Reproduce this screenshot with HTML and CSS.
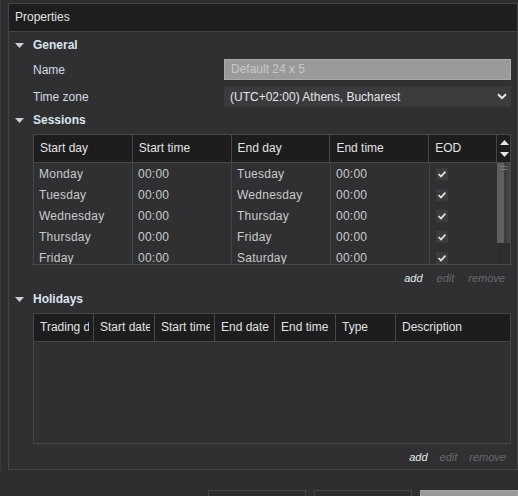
FILE: index.html
```html
<!DOCTYPE html>
<html>
<head>
<meta charset="utf-8">
<link rel="stylesheet" href="styles.css">
</head>
<body>
<div class="frame">
  <div class="panel">
    <div class="panel-title">Properties</div>
    <div class="panel-body">
      <div class="section-head"><svg class="caret" width="9" height="5" viewBox="0 0 9 5"><polygon points="0,0 9,0 4.5,5" fill="#cfcfcf"/></svg>General</div>
      <div class="fields">
        <div class="field"><span class="label">Name</span><div class="input">Default 24 x 5</div></div>
        <div class="field"><span class="label">Time zone</span><div class="select"><span>(UTC+02:00) Athens, Bucharest</span><svg width="10" height="7" viewBox="0 0 10 7"><polyline points="1,1.2 5,5.2 9,1.2" fill="none" stroke="#e8e8e8" stroke-width="2"/></svg></div></div>
      </div>

      <div class="section-head gap-top"><svg class="caret" width="9" height="5" viewBox="0 0 9 5"><polygon points="0,0 9,0 4.5,5" fill="#cfcfcf"/></svg>Sessions</div>
      <div class="tbl sessions">
        <div class="thead">
          <div class="th c1">Start day</div>
          <div class="th c1">Start time</div>
          <div class="th c1">End day</div>
          <div class="th c1">End time</div>
          <div class="th c5">EOD</div>
          <div class="th-scroll">
            <svg width="9" height="5" viewBox="0 0 9 5"><polygon points="0,5 9,5 4.5,0" fill="#e6e6e6"/></svg>
            <svg width="9" height="5" viewBox="0 0 9 5"><polygon points="0,0 9,0 4.5,5" fill="#e6e6e6"/></svg>
          </div>
        </div>
        <div class="tbody">
          <div class="rows">
            <div class="tr"><div class="td c1">Monday</div><div class="td c1">00:00</div><div class="td c1">Tuesday</div><div class="td c1">00:00</div><div class="td c5"><span class="check"><svg width="12" height="12" viewBox="0 0 12 12"><polyline points="2.6,6 5,8.5 9.4,3.6" fill="none" stroke="#e2e2e2" stroke-width="1.8"/></svg></span></div></div>
            <div class="tr"><div class="td c1">Tuesday</div><div class="td c1">00:00</div><div class="td c1">Wednesday</div><div class="td c1">00:00</div><div class="td c5"><span class="check"><svg width="12" height="12" viewBox="0 0 12 12"><polyline points="2.6,6 5,8.5 9.4,3.6" fill="none" stroke="#e2e2e2" stroke-width="1.8"/></svg></span></div></div>
            <div class="tr"><div class="td c1">Wednesday</div><div class="td c1">00:00</div><div class="td c1">Thursday</div><div class="td c1">00:00</div><div class="td c5"><span class="check"><svg width="12" height="12" viewBox="0 0 12 12"><polyline points="2.6,6 5,8.5 9.4,3.6" fill="none" stroke="#e2e2e2" stroke-width="1.8"/></svg></span></div></div>
            <div class="tr"><div class="td c1">Thursday</div><div class="td c1">00:00</div><div class="td c1">Friday</div><div class="td c1">00:00</div><div class="td c5"><span class="check"><svg width="12" height="12" viewBox="0 0 12 12"><polyline points="2.6,6 5,8.5 9.4,3.6" fill="none" stroke="#e2e2e2" stroke-width="1.8"/></svg></span></div></div>
            <div class="tr"><div class="td c1">Friday</div><div class="td c1">00:00</div><div class="td c1">Saturday</div><div class="td c1">00:00</div><div class="td c5"><span class="check"><svg width="12" height="12" viewBox="0 0 12 12"><polyline points="2.6,6 5,8.5 9.4,3.6" fill="none" stroke="#e2e2e2" stroke-width="1.8"/></svg></span></div></div>
          </div>
          <div class="scroll"><div class="thumb"><span></span><span></span></div></div>
        </div>
      </div>
      <div class="actions"><span class="on">add</span><span>edit</span><span>remove</span></div>

      <div class="section-head gap-small"><svg class="caret" width="9" height="5" viewBox="0 0 9 5"><polygon points="0,0 9,0 4.5,5" fill="#cfcfcf"/></svg>Holidays</div>
      <div class="tbl holidays">
        <div class="thead">
          <div class="th clip w60"><span>Trading days</span></div>
          <div class="th clip w61"><span>Start date</span></div>
          <div class="th clip w60"><span>Start time</span></div>
          <div class="th clip w60"><span>End date</span></div>
          <div class="th clip w61"><span>End time</span></div>
          <div class="th clip w60"><span>Type</span></div>
          <div class="th clip wdesc"><span>Description</span></div>
        </div>
        <div class="tbody empty"></div>
      </div>
      <div class="actions second"><span class="on">add</span><span>edit</span><span>remove</span></div>
    </div>
  </div>
</div>
<div class="buttons">
  <div class="btn"></div>
  <div class="btn"></div>
  <div class="btn primary"></div>
</div>
</body>
</html>
```

FILE: styles.css
```css
html, body {
  margin: 0;
  padding: 0;
}

body {
  background: #2e2e31;
  font-family: "Liberation Sans", Arial, sans-serif;
  font-size: 12px;
  color: #d4d4d4;
  width: 518px;
  height: 496px;
  overflow: hidden;
}

.frame {
  border-left: 1px solid #3b3b3e;
  padding: 3px 0 0 7px;
}

.panel {
  width: 510px;
  box-sizing: border-box;
  border: 1px solid #444447;
  background: #303033;
}

.panel-title {
  height: 27px;
  line-height: 27px;
  background: #1e1e1f;
  border-bottom: 1px solid #444447;
  padding-left: 6px;
  color: #e2e2e2;
}

.panel-body {
  padding: 3px 6px 4px 6px;
}

.section-head {
  height: 20px;
  line-height: 22px;
  display: flex;
  align-items: center;
  font-weight: bold;
  color: #dbe4ee;
}

.section-head.gap-top {
  margin-top: 3px;
}

.section-head.gap-small {
  margin-top: 3px;
}

.caret {
  margin-right: 9px;
  flex: none;
}

.fields {
  margin: 4px 0 0 18px;
  display: flex;
  flex-direction: column;
  gap: 6px;
}

.field {
  display: grid;
  grid-template-columns: 191px 287px;
  align-items: center;
  height: 21px;
}

.label {
  color: #d3dbe4;
}

.input {
  height: 21px;
  box-sizing: border-box;
  background: #9a9a9a;
  border: 1px solid #aaaaaa;
  color: #c7c7c7;
  padding-left: 6px;
  line-height: 19px;
}

.select {
  height: 21px;
  box-sizing: border-box;
  background: #3b3b3e;
  color: #e6e6e6;
  padding: 0 4px 0 6px;
  display: flex;
  align-items: center;
  justify-content: space-between;
}

.tbl {
  margin: 4px 0 0 18px;
  border: 1px solid #47474a;
  width: 478px;
  box-sizing: border-box;
}

.thead {
  display: flex;
  height: 27px;
  background: #1d1d1e;
  border-bottom: 1px solid #47474a;
}

.th {
  box-sizing: border-box;
  border-right: 1px solid #47474a;
  padding-left: 6px;
  line-height: 27px;
  white-space: nowrap;
  overflow: hidden;
  color: #e2e2e2;
}

.th.clip {
  padding-right: 4px;
}

.th.clip span {
  display: block;
  overflow: hidden;
  white-space: nowrap;
}

.c1 { width: 99px; }
.th.c5 { width: 68px; }
.td.c5 { width: 67px; border-right: none; }

.th-scroll {
  width: 12px;
  display: flex;
  flex-direction: column;
  align-items: center;
  justify-content: center;
  gap: 7px;
  padding-left: 1px;
}

.tbody {
  height: 101px;
  display: flex;
  overflow: hidden;
}

.rows {
  width: 463px;
}

.tr {
  display: flex;
  height: 21px;
}

.td {
  box-sizing: border-box;
  border-right: 1px solid #444447;
  padding-left: 5px;
  line-height: 22px;
  color: #cbcbcb;
  white-space: nowrap;
  letter-spacing: 0.25px;
}

.td.c5 {
  display: flex;
  align-items: center;
  padding-left: 6px;
}

.check {
  width: 12px;
  height: 12px;
  background: #3c3c40;
  display: block;
}

.check svg {
  display: block;
}

.scroll {
  width: 13px;
  background: #2d2d2f;
}

.thumb {
  height: 80px;
  width: 13px;
  background: linear-gradient(to right, #5f5f61 0, #5f5f61 7px, #3d3d40 7px, #3d3d40 10px, #47474a 10px);
  display: flex;
  flex-direction: column;
  gap: 2px;
  padding: 3px 0 0 3px;
  box-sizing: border-box;
}

.thumb span {
  display: block;
  width: 7px;
  height: 1px;
  background: #7a7a7c;
}

.w60 { width: 60px; }
.w61 { width: 61px; }
.wdesc { width: 114px; border-right: none; }

.tbody.empty {
  display: block;
}

.actions {
  margin-top: 5px;
  height: 16px;
  line-height: 16px;
  display: flex;
  justify-content: flex-end;
  gap: 14px;
  padding-right: 6px;
  font-style: italic;
  font-size: 11px;
  color: #68686b;
}

.actions.second {
  gap: 12px;
  padding-right: 5px;
}

.actions .on {
  color: #e6edf5;
}

.buttons {
  margin: 20px 0 0 208px;
  display: flex;
  gap: 8px;
}

.btn {
  width: 98px;
  height: 24px;
  box-sizing: border-box;
  border: 1px solid #454548;
  background: #2c2c2f;
}

.btn.primary {
  background: #9a9a9a;
  border-color: #a6a6a6;
}
```
